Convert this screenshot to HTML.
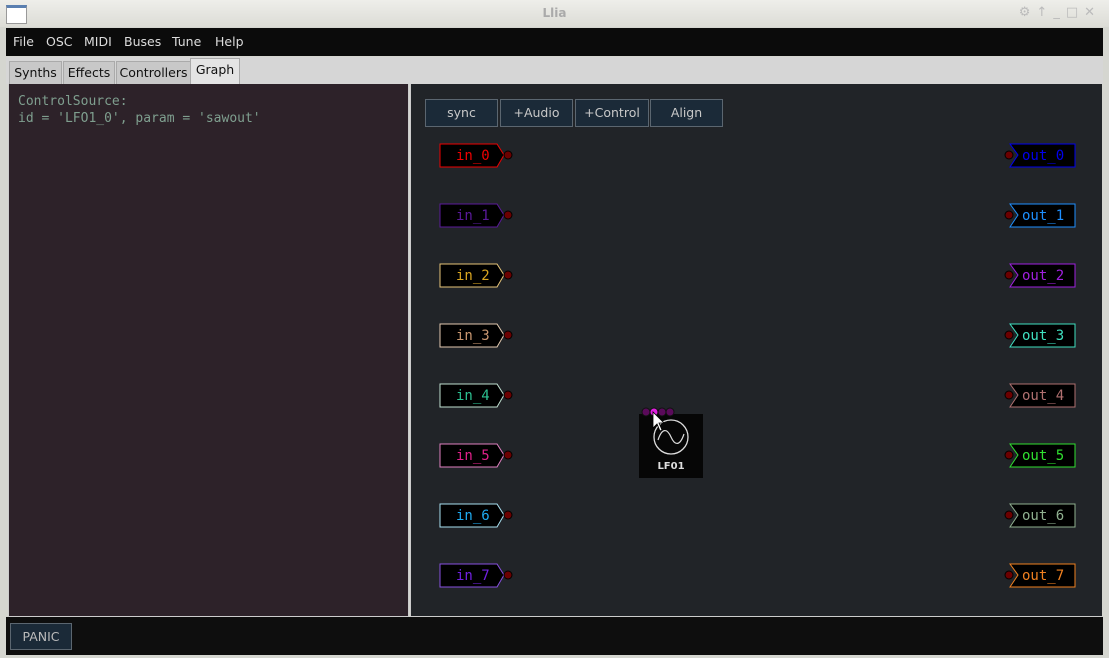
<!DOCTYPE html>
<html><head><style>
body{margin:0;width:1109px;height:658px;background:#d5d6d0;font-family:"DejaVu Sans","Liberation Sans",sans-serif;overflow:hidden;position:relative}
.tb{position:absolute;left:0;top:0;width:1109px;height:27px;background:linear-gradient(#eeeeea,#dcdcd6);}
.tb .t{position:absolute;left:0;right:0;top:6px;text-align:center;font-size:12px;color:#aaa;font-weight:bold}
.menu{position:absolute;left:6px;top:28px;width:1097px;height:28px;background:#0b0b0b;color:#ddd;font-size:12.5px}
.menu span{position:absolute;top:6px}
.tabs{position:absolute;left:6px;top:57px;width:1097px;height:27px;background:#d6d6d6}
.tab{position:absolute;top:4px;height:22px;background:#c8c8c8;border:1px solid #aaa;font-size:12.5px;line-height:22px;text-align:center;color:#111}
.left{position:absolute;left:8px;top:84px;width:399px;height:532px;background:#2d2229;border:1px solid #ccc;border-top:none}
.left pre{margin:0;position:absolute;left:9px;top:9px;font-family:"DejaVu Sans Mono","Liberation Mono",monospace;font-size:13px;line-height:17px;color:#7f9f8f}
.right{position:absolute;left:410px;top:84px;width:691px;height:532px;background:#212428;border-left:1px solid #ccc;border-bottom:1px solid #ccc}
.bot{position:absolute;left:6px;top:617px;width:1097px;height:38px;background:#0e0e0e}
.btn{position:absolute;background:#1b2a38;border:1px solid #5b6670;color:#c8c8c8;font-size:12.5px;text-align:center}
</style></head><body>
<div class="tb"><div style="position:absolute;left:6px;top:5px;width:19px;height:15px;background:#fff;border:1px solid #999;border-top:3px solid #5a7fb0"></div><div class="t">Llia</div>
<div style="position:absolute;right:8px;top:5px;color:#bbb;font-size:13px;letter-spacing:6px">⚙↑_□✕</div></div>
<div class="menu"><span style="left:7px">File</span><span style="left:40px">OSC</span><span style="left:78px">MIDI</span><span style="left:118px">Buses</span><span style="left:166px">Tune</span><span style="left:209px">Help</span></div>
<div class="tabs">
<div class="tab" style="left:3px;width:51px">Synths</div>
<div class="tab" style="left:57px;width:50px">Effects</div>
<div class="tab" style="left:110px;width:73px">Controllers</div>
<div class="tab" style="left:184px;top:1px;height:25px;width:48px;background:#e4e4e4;line-height:22px">Graph</div>
</div>
<div class="left"><pre>ControlSource:
id = 'LFO1_0', param = 'sawout'</pre></div>
<div class="right"></div>
<div class="btn" style="left:425px;top:99px;width:71px;height:26px;line-height:26px">sync</div>
<div class="btn" style="left:500px;top:99px;width:71px;height:26px;line-height:26px">+Audio</div>
<div class="btn" style="left:575px;top:99px;width:72px;height:26px;line-height:26px">+Control</div>
<div class="btn" style="left:650px;top:99px;width:71px;height:26px;line-height:26px">Align</div>
<svg width="1109" height="658" style="position:absolute;left:0;top:0" font-family="DejaVu Sans Mono, Liberation Mono, monospace" font-size="14">
<g stroke-width="1">
<path d="M440 144H497L504 155L497 167H440Z" fill="#000" stroke="#e00"/><text x="456" y="160" fill="#e00">in_0</text>
<path d="M440 204H497L504 215L497 227H440Z" fill="#000" stroke="#5a1a9a"/><text x="456" y="220" fill="#5a1a9a">in_1</text>
<path d="M440 264H497L504 275L497 287H440Z" fill="#000" stroke="#e6c478"/><text x="456" y="280" fill="#d9a520">in_2</text>
<path d="M440 324H497L504 335L497 347H440Z" fill="#000" stroke="#e2c9b0"/><text x="456" y="340" fill="#c89670">in_3</text>
<path d="M440 384H497L504 395L497 407H440Z" fill="#000" stroke="#c0e0d0"/><text x="456" y="400" fill="#2cc090">in_4</text>
<path d="M440 444H497L504 455L497 467H440Z" fill="#000" stroke="#e080c0"/><text x="456" y="460" fill="#e0208a">in_5</text>
<path d="M440 504H497L504 515L497 527H440Z" fill="#000" stroke="#a8e0f0"/><text x="456" y="520" fill="#1eaaf0">in_6</text>
<path d="M440 564H497L504 575L497 587H440Z" fill="#000" stroke="#8850e0"/><text x="456" y="580" fill="#7020e0">in_7</text>
</g>
<g fill="#6b0000" stroke="#000">
<circle cx="508" cy="155" r="4"/><circle cx="508" cy="215" r="4"/><circle cx="508" cy="275" r="4"/><circle cx="508" cy="335" r="4"/><circle cx="508" cy="395" r="4"/><circle cx="508" cy="455" r="4"/><circle cx="508" cy="515" r="4"/><circle cx="508" cy="575" r="4"/>
<circle cx="1009" cy="155" r="4"/><circle cx="1009" cy="215" r="4"/><circle cx="1009" cy="275" r="4"/><circle cx="1009" cy="335" r="4"/><circle cx="1009" cy="395" r="4"/><circle cx="1009" cy="455" r="4"/><circle cx="1009" cy="515" r="4"/><circle cx="1009" cy="575" r="4"/>
</g>
<g>
<path d="M1010 144H1075V167H1010L1018 155Z" fill="#000" stroke="#0000ee"/><text x="1022" y="160" fill="#0000ee">out_0</text>
<path d="M1010 204H1075V227H1010L1018 215Z" fill="#000" stroke="#1e8fff"/><text x="1022" y="220" fill="#1e8fff">out_1</text>
<path d="M1010 264H1075V287H1010L1018 275Z" fill="#000" stroke="#a020e0"/><text x="1022" y="280" fill="#a020e0">out_2</text>
<path d="M1010 324H1075V347H1010L1018 335Z" fill="#000" stroke="#40e0c0"/><text x="1022" y="340" fill="#40e0c0">out_3</text>
<path d="M1010 384H1075V407H1010L1018 395Z" fill="#000" stroke="#b07070"/><text x="1022" y="400" fill="#b07070">out_4</text>
<path d="M1010 444H1075V467H1010L1018 455Z" fill="#000" stroke="#30e030"/><text x="1022" y="460" fill="#30e030">out_5</text>
<path d="M1010 504H1075V527H1010L1018 515Z" fill="#000" stroke="#90b090"/><text x="1022" y="520" fill="#90b090">out_6</text>
<path d="M1010 564H1075V587H1010L1018 575Z" fill="#000" stroke="#f08020"/><text x="1022" y="580" fill="#f08020">out_7</text>
</g>
<rect x="639" y="414" width="64" height="64" fill="#060606"/>
<circle cx="671" cy="437" r="17" fill="none" stroke="#ddd" stroke-width="1.3"/>
<path d="M658 440C662 428 667 428 671 437S680 446 684 434" fill="none" stroke="#ddd" stroke-width="1.2"/>
<text x="671" y="469" fill="#ddd" font-family="DejaVu Sans, sans-serif" font-size="10" font-weight="bold" text-anchor="middle">LF01</text>
<g fill="#5a0a5a" stroke="#111"><circle cx="646" cy="412" r="4"/><circle cx="662" cy="412" r="4"/><circle cx="670" cy="412" r="4"/></g>
<circle cx="654" cy="412" r="4" fill="#e020e0" stroke="#111"/>
<path d="M653 412V428L657 424L660 431L662 430L659 423H664Z" fill="#fff" stroke="#000" stroke-width="0.8"/>
</svg>
<div class="bot"><div class="btn" style="left:4px;top:6px;width:60px;height:25px;line-height:25px;color:#bbb">PANIC</div></div>
</body></html>
